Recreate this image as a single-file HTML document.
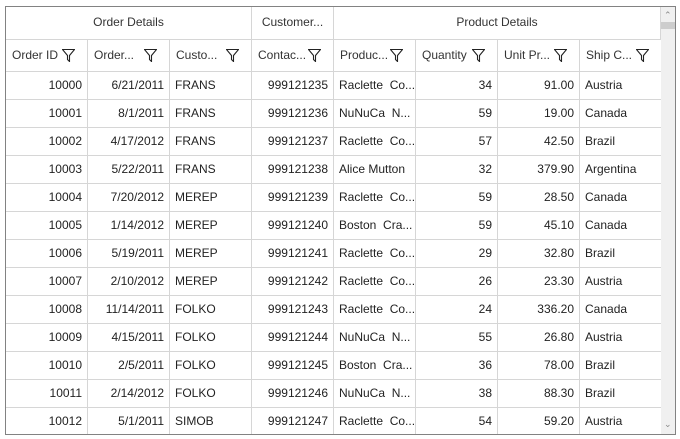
<!DOCTYPE html>
<html><head><style>
body{margin:0;background:#fff;width:680px;height:439px;overflow:hidden;font-family:"Liberation Sans",sans-serif;font-size:12px;color:#222}
.g{position:absolute;left:5px;top:6px;width:669px;height:427px;border:1px solid #828282;overflow:hidden;background:#fff}
.c{position:absolute;box-sizing:border-box;border-right:1px solid #d6d6d6;border-bottom:1px solid #d6d6d6;white-space:nowrap;overflow:hidden;line-height:27px;padding:0 5px}
.h1{line-height:31px;text-align:center;color:#333}
.h2{line-height:31px;padding-left:6px;color:#333}
.r{text-align:right}
.f{position:absolute;right:12px;top:9px}
.sb{position:absolute;left:655px;top:0;width:14px;height:427px;background:#f0f0f0}
.th{position:absolute;left:0;top:15px;width:14px;height:7px;background:#cdcdcd}
</style></head><body>
<div class="g" id="g"></div>
<script>
var g=document.getElementById('g');var h='';
function cell(x,y,w,hh,cls,t){h+='<div class="c '+cls+'" style="left:'+x+'px;top:'+y+'px;width:'+w+'px;height:'+hh+'px">'+t+'</div>';}
var W=82;
cell(0,0,246,33,'h1','Order Details');cell(246,0,82,33,'h1','Customer...');cell(328,0,327,33,'h1','Product Details');
var fi='<svg class="f" width="13" height="13" viewBox="0 0 13 13"><path d="M0.5 0.5H12.5L7.5 6.5V12.5L5.5 10.5V6.5Z" fill="none" stroke="#222" stroke-width="1.1"/></svg>';
var hd=['Order ID','Order...','Custo...','Contac...','Produc...','Quantity','Unit Pr...','Ship C...'];
for(var i=0;i<8;i++)cell(i*W,33,W,32,'h2',hd[i]+fi);
var d=[['10000','6/21/2011','FRANS','999121235','Raclette  Co...','34','91.00','Austria'],
['10001','8/1/2011','FRANS','999121236','NuNuCa  N...','59','19.00','Canada'],
['10002','4/17/2012','FRANS','999121237','Raclette  Co...','57','42.50','Brazil'],
['10003','5/22/2011','FRANS','999121238','Alice Mutton','32','379.90','Argentina'],
['10004','7/20/2012','MEREP','999121239','Raclette  Co...','59','28.50','Canada'],
['10005','1/14/2012','MEREP','999121240','Boston  Cra...','59','45.10','Canada'],
['10006','5/19/2011','MEREP','999121241','Raclette  Co...','29','32.80','Brazil'],
['10007','2/10/2012','MEREP','999121242','Raclette  Co...','26','23.30','Austria'],
['10008','11/14/2011','FOLKO','999121243','Raclette  Co...','24','336.20','Canada'],
['10009','4/15/2011','FOLKO','999121244','NuNuCa  N...','55','26.80','Austria'],
['10010','2/5/2011','FOLKO','999121245','Boston  Cra...','36','78.00','Brazil'],
['10011','2/14/2012','FOLKO','999121246','NuNuCa  N...','38','88.30','Brazil'],
['10012','5/1/2011','SIMOB','999121247','Raclette  Co...','54','59.20','Austria']];
var ra=[1,1,0,1,0,1,1,0];
for(var r=0;r<d.length;r++)for(var i=0;i<8;i++)cell(i*W,65+r*28,W,28,ra[i]?'r':'',d[r][i].replace(/  /g,'&nbsp; '));
h+='<div class="sb"><div class="th"></div><div style="position:absolute;left:3px;top:3px;font-size:9px;color:#888">&#8963;</div><div style="position:absolute;left:3px;top:412px;font-size:9px;color:#888">&#8964;</div></div>';
g.innerHTML=h;
</script>
</body></html>
